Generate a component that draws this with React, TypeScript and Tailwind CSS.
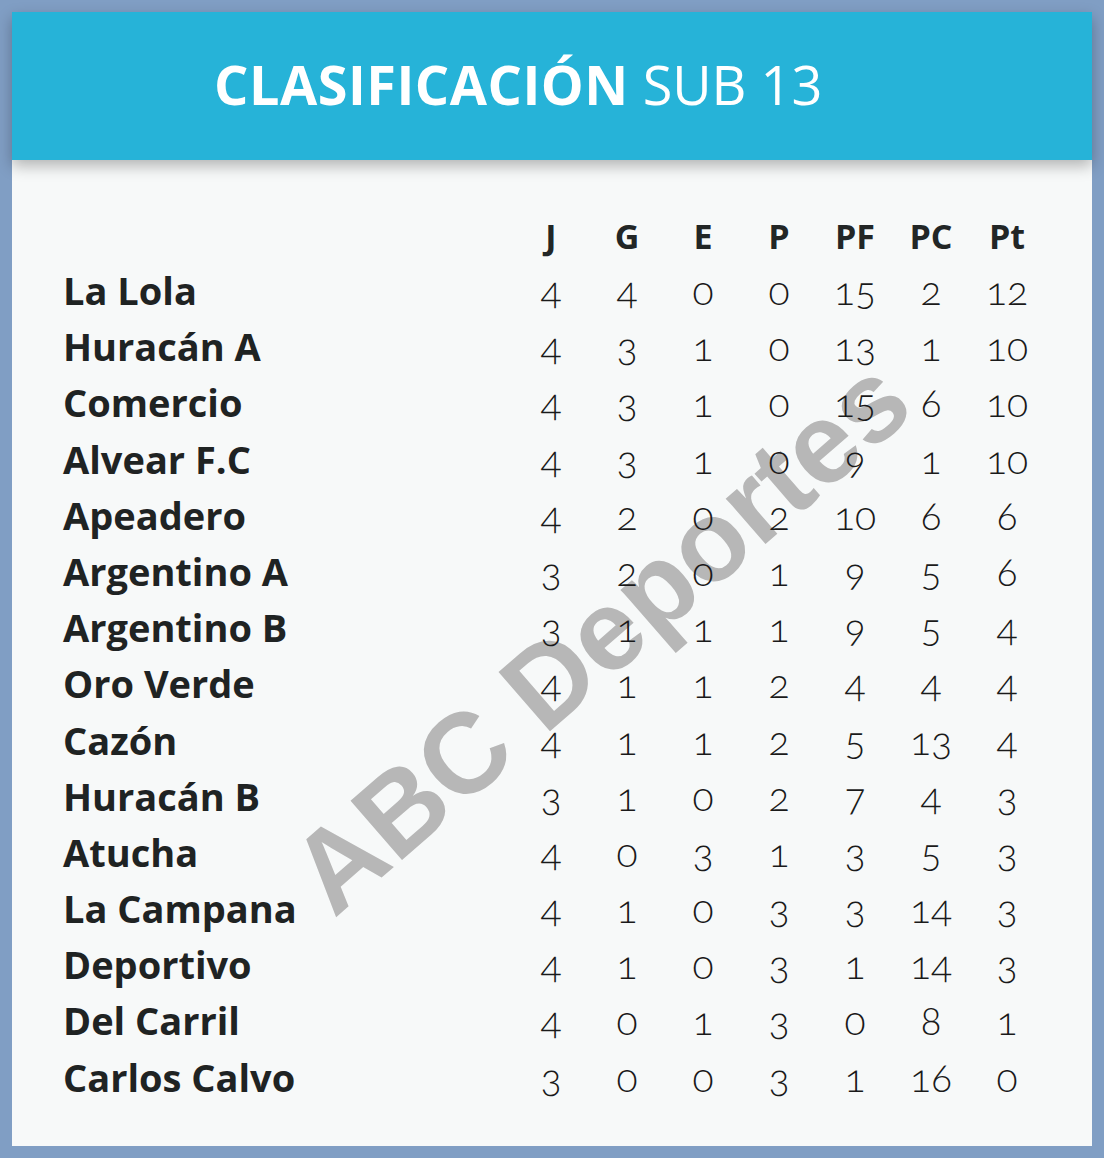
const rows: [string, number[]][] = [
  ["La Lola", [4, 4, 0, 0, 15, 2, 12]],
  ["Huracán A", [4, 3, 1, 0, 13, 1, 10]],
  ["Comercio", [4, 3, 1, 0, 15, 6, 10]],
  ["Alvear F.C", [4, 3, 1, 0, 9, 1, 10]],
  ["Apeadero", [4, 2, 0, 2, 10, 6, 6]],
  ["Argentino A", [3, 2, 0, 1, 9, 5, 6]],
  ["Argentino B", [3, 1, 1, 1, 9, 5, 4]],
  ["Oro Verde", [4, 1, 1, 2, 4, 4, 4]],
  ["Cazón", [4, 1, 1, 2, 5, 13, 4]],
  ["Huracán B", [3, 1, 0, 2, 7, 4, 3]],
  ["Atucha", [4, 0, 3, 1, 3, 5, 3]],
  ["La Campana", [4, 1, 0, 3, 3, 14, 3]],
  ["Deportivo", [4, 1, 0, 3, 1, 14, 3]],
  ["Del Carril", [4, 0, 1, 3, 0, 8, 1]],
  ["Carlos Calvo", [3, 0, 0, 3, 1, 16, 0]],
];

const cols = ["J", "G", "E", "P", "PF", "PC", "Pt"];

export default function App() {
  return (
    <div className="relative w-[1104px] h-[1158px] bg-[#809ec4] p-3 overflow-hidden">
      <div className="relative w-full h-full bg-[#f7f9f9] flex flex-col">
        <header className="relative z-20 h-[148px] shrink-0 bg-[#26b3d8] shadow-[0_6px_14px_rgba(0,0,0,0.28)] flex items-center pl-[202px]">
          <h1 className="text-white text-[54px] leading-none whitespace-nowrap font-['Open_Sans',sans-serif] mt-[-4px]">
            <span className="font-bold tracking-[0.5px]">CLASIFICACIÓN</span>
            <span className="font-normal ml-[14px]">SUB 13</span>
          </h1>
        </header>

        <div
          aria-hidden
          className="absolute z-0 left-[322px] top-[811px] origin-[0_96px] rotate-[-41deg] whitespace-nowrap text-[114px] leading-none font-bold text-[#b7b7b7] font-['Liberation_Sans',Arial,sans-serif]"
        >
          ABC Deportes
        </div>

        <div className="relative z-10 pt-[49px] pl-[51px]">
          <div className="grid grid-cols-[450px_repeat(7,76px)] h-[54px] items-center">
            <div />
            {cols.map((c) => (
              <div
                key={c}
                className="text-center text-[34px] font-bold text-[#222626] font-['Open_Sans',sans-serif] leading-none"
              >
                {c}
              </div>
            ))}
          </div>
          {rows.map(([name, vals]) => (
            <div key={name} className="grid grid-cols-[450px_repeat(7,76px)] h-[56.2px] items-baseline">
              <div className="text-[38px] font-bold text-[#1f2323] font-['Open_Sans',sans-serif] leading-[55px] whitespace-nowrap">
                {name}
              </div>
              {vals.map((v, i) => (
                <div
                  key={i}
                  className="text-center text-[39px] font-light text-[#1a1a1a] font-['Lato',sans-serif] oldstyle-nums leading-[55px]"
                >
                  {v}
                </div>
              ))}
            </div>
          ))}
        </div>
      </div>
    </div>
  );
}
